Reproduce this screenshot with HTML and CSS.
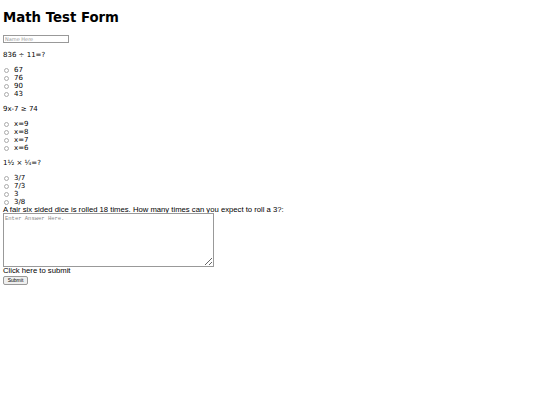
FILE: index.html
```html
<!DOCTYPE html>
<html>
<head>
<meta charset="utf-8">
<link rel="stylesheet" href="styles.css">
</head>
<body>
<h1 class="title">Math Test Form</h1>
<form class="form">
  <input class="name" type="text" placeholder="Name Here">
  <p class="q">836 ÷ 11=?</p>
  <ul class="opts">
    <li><input type="radio" name="q1" class="radio"><span>67</span></li>
    <li><input type="radio" name="q1" class="radio"><span>76</span></li>
    <li><input type="radio" name="q1" class="radio"><span>90</span></li>
    <li><input type="radio" name="q1" class="radio"><span>43</span></li>
  </ul>
  <p class="q">9x-7 ≥ 74</p>
  <ul class="opts">
    <li><input type="radio" name="q2" class="radio"><span>x=9</span></li>
    <li><input type="radio" name="q2" class="radio"><span>x=8</span></li>
    <li><input type="radio" name="q2" class="radio"><span>x=7</span></li>
    <li><input type="radio" name="q2" class="radio"><span>x=6</span></li>
  </ul>
  <p class="q">1½ × ¼=?</p>
  <ul class="opts">
    <li><input type="radio" name="q3" class="radio"><span>3/7</span></li>
    <li><input type="radio" name="q3" class="radio"><span>7/3</span></li>
    <li><input type="radio" name="q3" class="radio"><span>3</span></li>
    <li><input type="radio" name="q3" class="radio"><span>3/8</span></li>
  </ul>
  <label class="essay"><span class="u">A fair six sided dice is rolled 18 times. How many times can</span> you expect to roll a 3?:</label>
  <textarea class="answer" placeholder="Enter Answer Here."></textarea>
  <div class="sublabel">Click here to submit</div>
  <button class="submit" type="button">Submit</button>
</form>
</body>
</html>
```
FILE: styles.css
```css
html, body {
  margin: 0;
  padding: 0;
  background: #fff;
}
body {
  padding: 3px;
  color: #000;
  font-family: "DejaVu Sans", sans-serif;
  font-size: 7px;
}
.title {
  font-size: 13.3px;
  font-weight: bold;
  margin: 7px 0 9px 0;
  line-height: 16px;
}
.form {
  display: flex;
  flex-direction: column;
  align-items: flex-start;
}
.name {
  width: 62px;
  height: 6px;
  padding: 0 1px;
  border: 1px solid #999;
  font-family: "DejaVu Sans", sans-serif;
  font-size: 5px;
  margin: 0;
  box-sizing: content-box;
}
.name::placeholder { color: #999; }
.q {
  margin: 7px 0 0 0;
  line-height: 8px;
}
.name + .q {
  margin-top: 8px;
}
.opts {
  list-style: none;
  margin: 7px 0 0 0;
  padding: 0;
}
.opts li {
  display: flex;
  align-items: center;
  height: 8px;
  line-height: 8px;
}
.radio {
  appearance: none;
  width: 5px;
  height: 5px;
  border: 1px solid #aaa;
  border-radius: 50%;
  margin: 0 5px 0 1px;
  background: #fff;
}
.essay {
  font-family: "Liberation Sans", Arial, sans-serif;
  font-size: 7.7px;
  line-height: 7px;
  margin-top: 0;
}
.u {
  text-decoration: underline;
}
.answer {
  box-sizing: border-box;
  width: 211px;
  height: 54px;
  margin: 0;
  padding: 1px 1px;
  border: 1px solid #999;
  font-family: "Liberation Mono", monospace;
  font-size: 5.5px;
  resize: both;
}
.answer::placeholder { color: #888; }
.sublabel {
  font-family: "Liberation Sans", Arial, sans-serif;
  font-size: 7.7px;
  line-height: 8px;
  margin-top: 0;
}
.submit {
  font-family: "Liberation Sans", Arial, sans-serif;
  font-size: 5px;
  padding: 1px 3px;
  margin: 1px 0 0 0;
  height: 9px;
  width: 25px;
  line-height: 5px;
  border: 1px solid #999;
  border-radius: 2px;
  background: #efefef;
}
```
